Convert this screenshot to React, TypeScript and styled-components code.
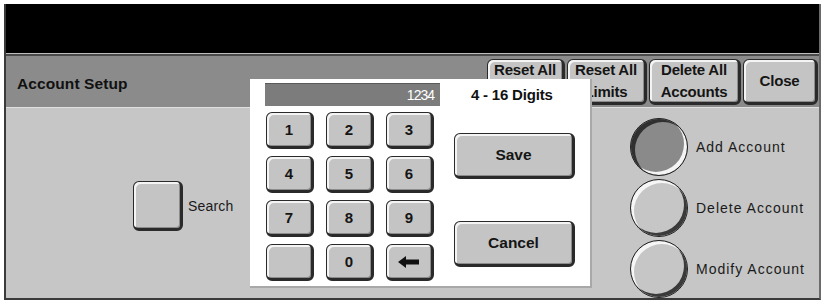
import React from "react";
import styled, { createGlobalStyle } from "styled-components";

const Global = createGlobalStyle`
  html, body { margin: 0; padding: 0; background: #fff; }
  body { font-family: "Liberation Sans", Arial, sans-serif; }
`;

const Page = styled.div`
  width: 823px;
  height: 303px;
  box-sizing: border-box;
  padding: 4px 2px 3px 4px;
  background: #fff;
  position: relative;
  overflow: hidden;
`;

const Frame = styled.div`
  height: 100%;
  display: flex;
  flex-direction: column;
  border-left: 2px solid #3a3a3a;
  border-right: 2px solid #6a6a6a;
  border-bottom: 2px solid #3a3a3a;
  box-sizing: border-box;
`;

const BlackBar = styled.div`
  height: 52px;
  background: #000;
  border-bottom: 1px solid #bdbdbd;
`;

const Header = styled.div`
  height: 50px;
  background: #8b8b8b;
  border-top: 2px solid #4a4a4a;
  border-bottom: 1px solid #e0e0e0;
  display: flex;
  align-items: flex-start;
  justify-content: space-between;
  padding: 3px 1px 0 11px;
`;

const Title = styled.div`
  font-size: 15.5px;
  font-weight: bold;
  color: #111;
  margin-top: 16px;
  letter-spacing: 0.1px;
`;

const TopButtons = styled.div`
  display: flex;
  gap: 2px;
`;

const RaisedButton = styled.div`
  box-sizing: border-box;
  background: #c4c4c4;
  border: 1px solid #2a2a2a;
  border-right-width: 3px;
  border-bottom-width: 3px;
  border-radius: 6px;
  box-shadow: inset 2px 2px 0 #f4f4f4, inset -1px -1px 0 #8c8c8c;
  display: flex;
  align-items: center;
  justify-content: center;
  text-align: center;
  font-weight: bold;
  color: #151515;
`;

const TopButton = styled(RaisedButton)<{ $w: number }>`
  width: ${(p) => p.$w}px;
  height: 46px;
  font-size: 15px;
  line-height: 22px;
  letter-spacing: -0.2px;
`;

const Content = styled.div`
  flex: 1;
  background: #c6c6c6;
  display: flex;
  justify-content: space-between;
`;

const SearchArea = styled.div`
  display: flex;
  align-items: center;
  gap: 5px;
  padding: 73px 0 0 127px;
  align-self: flex-start;
`;

const SquareButton = styled(RaisedButton)`
  width: 50px;
  height: 50px;
`;

const Label = styled.span<{ $spread?: boolean }>`
  font-size: 14px;
  color: #1a1a1a;
  letter-spacing: ${(p) => (p.$spread ? "1px" : "0.2px")};
`;

const RadioList = styled.div`
  display: flex;
  flex-direction: column;
  gap: 3px;
  padding: 10px 0 0 0;
  width: 189px;
`;

const RadioRow = styled.div`
  display: flex;
  align-items: center;
  gap: 8px;
`;

const Radio = styled.div<{ $on?: boolean }>`
  width: 58px;
  height: 58px;
  border-radius: 50%;
  box-sizing: border-box;
  flex: none;
  background: ${(p) => (p.$on ? "#8a8a8a" : "#c6c6c6")};
  border: 1px solid #222;
  box-shadow: ${(p) =>
    p.$on
      ? "inset 4px 3px 0 #303030, inset -3px -3px 0 #f4f4f4"
      : "inset 3px 3px 0 #f6f6f6, inset -3px -3px 0 #3a3a3a"};
`;

const Dialog = styled.div`
  position: absolute;
  left: 250px;
  top: 79px;
  width: 342px;
  height: 209px;
  box-sizing: border-box;
  background: #fff;
  border-right: 2px solid #a8a8a8;
  border-bottom: 2px solid #a8a8a8;
  padding: 4px 0 0 15px;
  display: grid;
  grid-template-columns: 175px 1fr;
  grid-template-rows: 23px 1fr;
  column-gap: 14px;
`;

const Display = styled.div`
  background: #7c7c7c;
  color: #fff;
  font-size: 14px;
  letter-spacing: -1px;
  text-align: right;
  line-height: 23px;
  padding-right: 6px;
  border-top: 1px solid #5a5a5a;
`;

const Digits = styled.div`
  font-size: 15px;
  font-weight: bold;
  color: #111;
  line-height: 23px;
  padding-left: 17px;
  letter-spacing: -0.2px;
`;

const Keypad = styled.div`
  display: grid;
  grid-template-columns: repeat(3, 48px);
  grid-auto-rows: 37px;
  column-gap: 12px;
  row-gap: 7px;
  padding: 6px 0 0 1px;
`;

const Key = styled(RaisedButton)`
  font-size: 15px;
`;

const Actions = styled.div`
  display: flex;
  flex-direction: column;
  gap: 42px;
  padding: 27px 0 0 0;
`;

const ActionButton = styled(RaisedButton)`
  width: 121px;
  height: 46px;
  font-size: 15.5px;
`;

const Arrow = () => (
  <svg width="22" height="12" viewBox="0 0 22 12">
    <path d="M0 6 L8 0 L8 3.5 L21 3.5 L21 8.5 L8 8.5 L8 12 Z" fill="#111" />
  </svg>
);

const keys = ["1", "2", "3", "4", "5", "6", "7", "8", "9", "", "0", "back"];

export default function App() {
  return (
    <>
      <Global />
      <Page>
        <Frame>
          <BlackBar />
          <Header>
            <Title>Account Setup</Title>
            <TopButtons>
              <TopButton $w={78}>
                Reset All
                <br />
                Usage
              </TopButton>
              <TopButton $w={80}>
                Reset All
                <br />
                Limits
              </TopButton>
              <TopButton $w={92}>
                Delete All
                <br />
                Accounts
              </TopButton>
              <TopButton $w={75}>Close</TopButton>
            </TopButtons>
          </Header>
          <Content>
            <SearchArea>
              <SquareButton />
              <Label>Search</Label>
            </SearchArea>
            <RadioList>
              <RadioRow>
                <Radio $on />
                <Label $spread>Add Account</Label>
              </RadioRow>
              <RadioRow>
                <Radio />
                <Label $spread>Delete Account</Label>
              </RadioRow>
              <RadioRow>
                <Radio />
                <Label $spread>Modify Account</Label>
              </RadioRow>
            </RadioList>
          </Content>
        </Frame>
        <Dialog>
          <Display>1234</Display>
          <Digits>4 - 16 Digits</Digits>
          <Keypad>
            {keys.map((k, i) => (
              <Key key={i}>{k === "back" ? <Arrow /> : k}</Key>
            ))}
          </Keypad>
          <Actions>
            <ActionButton>Save</ActionButton>
            <ActionButton>Cancel</ActionButton>
          </Actions>
        </Dialog>
      </Page>
    </>
  );
}
